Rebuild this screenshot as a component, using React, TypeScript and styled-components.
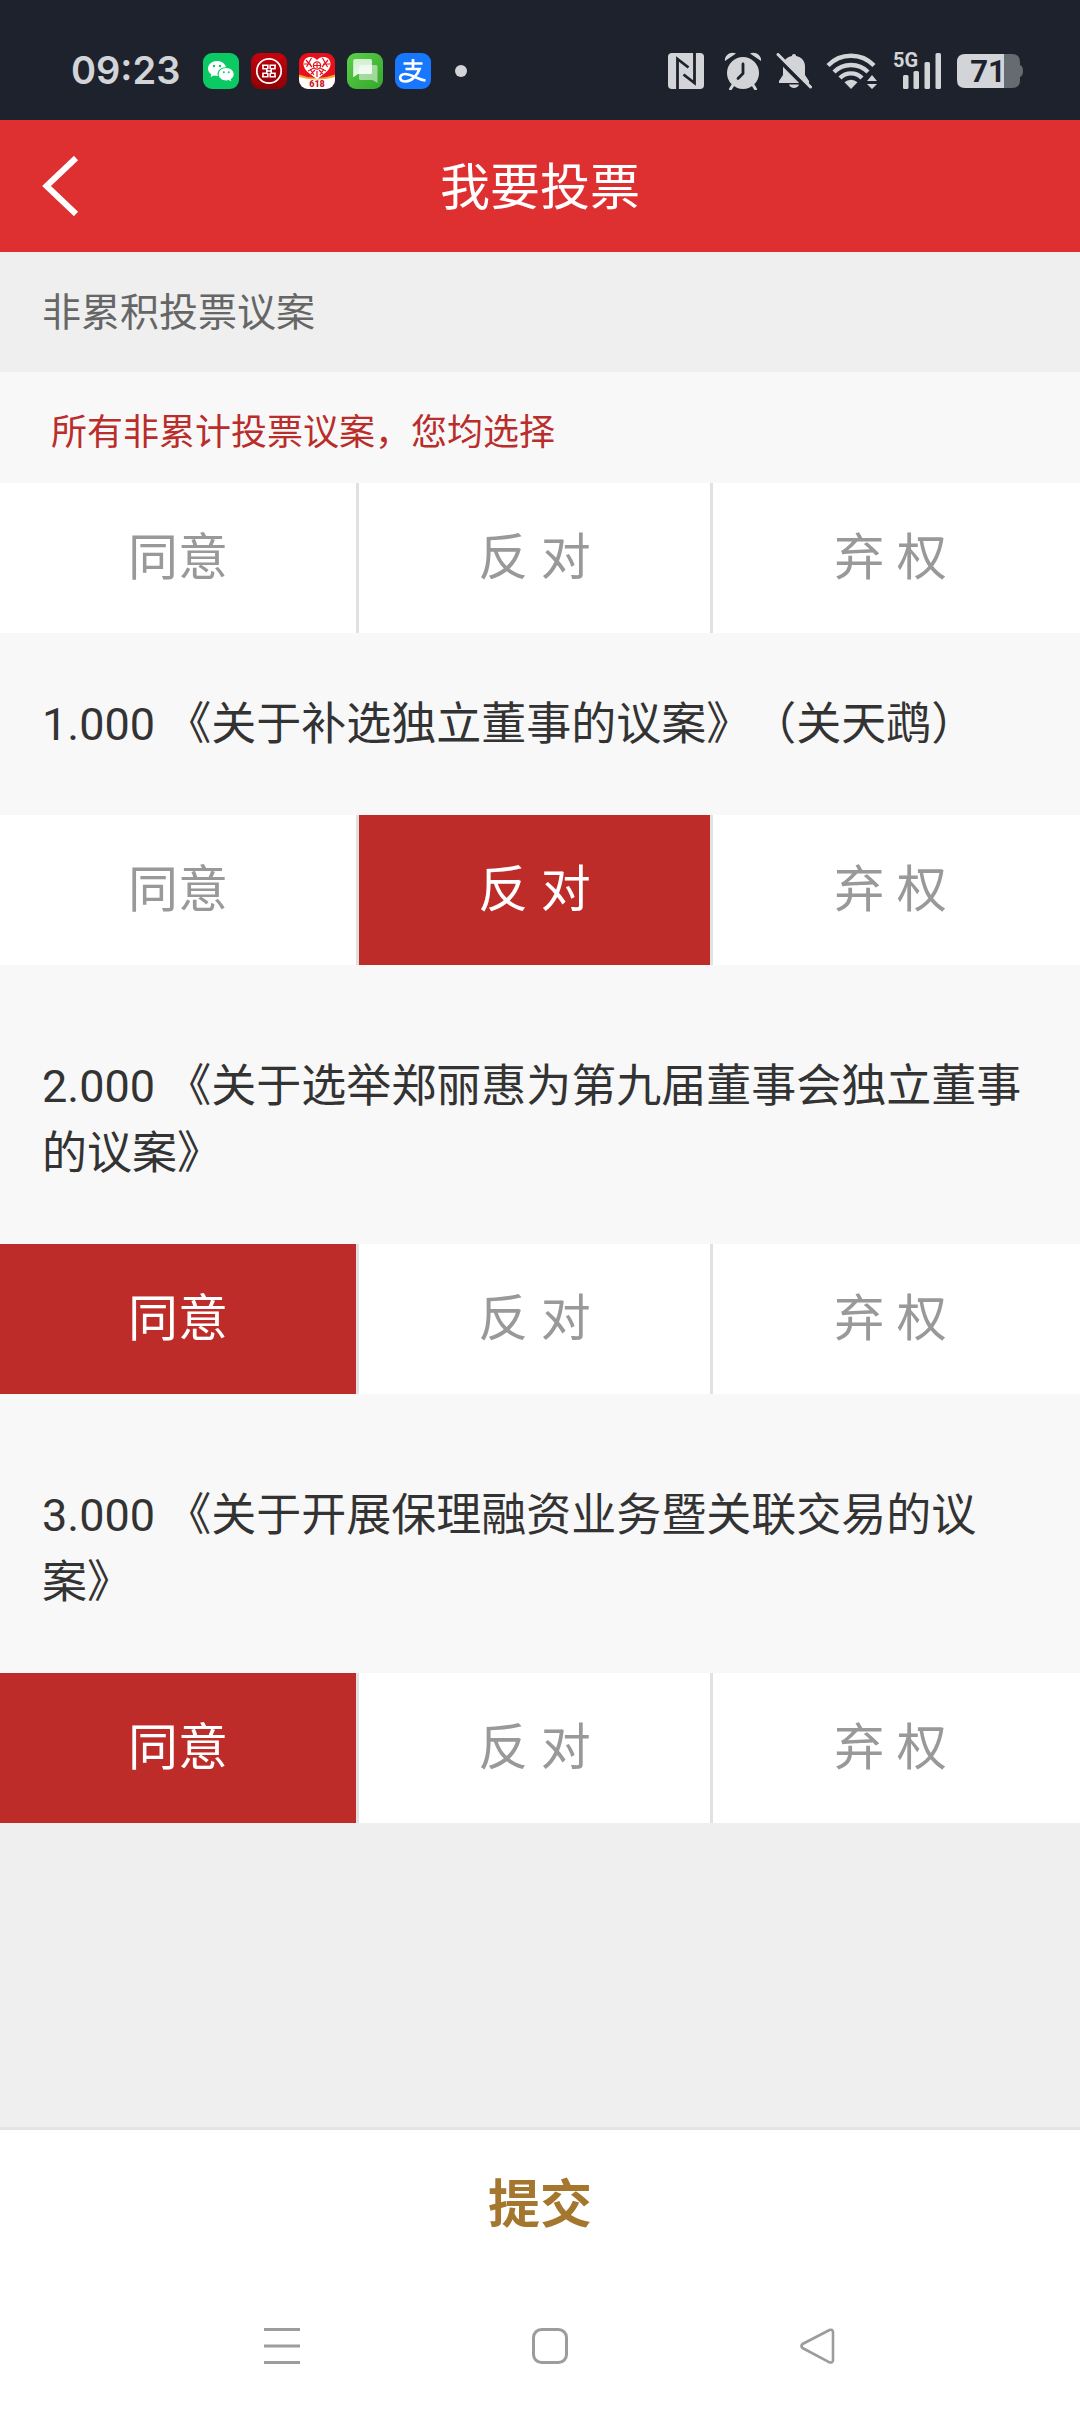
import React, { useState } from "react";
import styled, { createGlobalStyle, css } from "styled-components";

const GlobalStyle = createGlobalStyle`
  * { box-sizing: border-box; }
  body {
    margin: 0;
    background: #efefef;
    font-family: Roboto, "Noto Sans CJK SC", sans-serif;
    text-spacing-trim: space-all;
  }
  button { font-family: inherit; border: 0; padding: 0; cursor: pointer; }
  svg { display: block; }
`;

const Page = styled.div`
  display: flex;
  flex-direction: column;
  min-height: 100vh;
`;

const StatusBar = styled.div`
  display: flex;
  align-items: center;
  height: 120px;
  padding: 22px 57px 0 71px;
  background: #1e222d;
  color: #d3d4d7;
`;

const Clock = styled.time`
  width: 132px;
  padding-bottom: 2px;
  font: 600 38px/38px Inter, sans-serif;
`;

const AppIcons = styled.div`
  display: flex;
  align-items: center;
  gap: 12px;
  margin-right: auto;
`;

const Dot = styled.i`
  width: 12px;
  height: 12px;
  margin-left: 12px;
  border-radius: 50%;
  background: #d3d4d7;
`;

const SystemIcons = styled.div`
  display: flex;
  align-items: center;
  gap: 14px;
`;

const Header = styled.header`
  display: grid;
  grid-template-columns: 120px 1fr 120px;
  align-items: center;
  height: 132px;
  background: #df3031;
`;

const BackButton = styled.button`
  display: flex;
  align-items: center;
  height: 132px;
  padding-left: 42px;
  background: none;
`;

const Title = styled.h1`
  margin: 0;
  padding-top: 4px;
  color: #fff;
  font-size: 50px;
  font-weight: 400;
  line-height: 72px;
  text-align: center;
`;

const SectionTitle = styled.h2`
  margin: 0;
  padding: 31px 42px 29px;
  background: #efefef;
  color: #666;
  font-size: 39px;
  font-weight: 400;
  line-height: 60px;
`;

const Ballot = styled.main`
  background: #f8f8f8;
`;

const Hint = styled.p`
  margin: 0;
  padding: 33px 51px 22px;
  color: #b92d2b;
  font-size: 36px;
  line-height: 56px;
`;

const Proposal = styled.section`
  & + & { padding-top: 30px; }
`;

const ProposalTitle = styled.h3`
  margin: 0;
  padding: 58px 42px 57px;
  color: #333;
  font-size: 45px;
  font-weight: 400;
  line-height: 67px;
`;

const Options = styled.div`
  display: grid;
  grid-template-columns: 359fr 354fr 367fr;
  height: 150px;
  background: #fff;
`;

const Option = styled.button<{ $selected: boolean }>`
  background: #fff;
  color: #999;
  font-size: 50px;
  line-height: 72px;
  border-right: 3px solid #e1e1e1;
  &:last-child { border-right: 0; padding-right: 12px; }
  ${(p) => p.$selected && css`
    background: #be2c2a;
    color: #fff;
  `}
`;

const Footer = styled.footer`
  margin-top: auto;
  border-top: 3px solid #e4e4e4;
  background: #fff;
`;

const Submit = styled.button`
  display: block;
  width: 100%;
  height: 148px;
  padding-top: 4px;
  background: #fff;
  color: #a5762d;
  font-size: 52px;
  font-weight: 700;
  line-height: 76px;
`;

const NavBar = styled.nav`
  display: grid;
  grid-template-columns: repeat(3, 1fr);
  height: 134px;
  padding: 2px 128px 0 148px;
`;

const NavButton = styled.button`
  display: grid;
  place-items: center;
  background: none;
`;

const WeChatIcon = () => (
  <svg width="36" height="36" viewBox="0 0 36 36">
    <rect width="36" height="36" rx="9" fill="#0bca63" />
    <path d="M14 8c-4.900 0-9 3.300-9 7.500 0 2.400 1.300 4.400 3.300 5.800L7.600 24l3.200-1.600c1 .3 2.100.5 3.200.5h.8c-.2-.6-.3-1.200-.3-1.800 0-3.900 3.600-6.900 8-6.900h.5C22.200 10.600 18.500 8 14 8z" fill="#fff" />
    <path d="M23.200 15c-4.200 0-7.500 2.800-7.500 6.200s3.300 6.200 7.500 6.200c.9 0 1.800-.1 2.600-.4l2.500 1.300-.6-2.200c1.800-1.100 3-2.900 3-4.900 0-3.400-3.300-6.200-7.500-6.200z" fill="#fff" />
    <g fill="#0bca63"><circle cx="11" cy="13" r="1.200" /><circle cx="17" cy="13" r="1.200" /><circle cx="20.800" cy="19.200" r="1" /><circle cx="25.700" cy="19.200" r="1" /></g>
  </svg>
);

const BankIcon = () => (
  <svg width="36" height="36" viewBox="0 0 36 36">
    <defs><linearGradient id="bank" x1="0" y1="0" x2="0" y2="1"><stop stopColor="#c5030d" /><stop offset="1" stopColor="#8d0005" /></linearGradient></defs>
    <rect width="36" height="36" rx="9" fill="url(#bank)" />
    <g fill="none" stroke="#fff">
      <circle cx="18" cy="18" r="12.200" strokeWidth="1.700" />
      <path d="M11 12.200h5.800v3.800M25 12.200h-5.800v3.800M11.200 15.800h4.600v4.400h-4.600M24.800 15.800h-4.600v4.400h4.600M16.800 20v3.800H11M19.200 20v3.800H25M12 12v4M24 12v4M12 20v4M24 20v4M15 18h6" strokeWidth="1.600" />
    </g>
  </svg>
);

const PromoIcon = () => (
  <svg width="36" height="36" viewBox="0 0 36 36">
    <defs><clipPath id="promo"><rect width="36" height="36" rx="9" /></clipPath></defs>
    <g clipPath="url(#promo)">
      <rect width="36" height="36" fill="#e8101b" />
      <path d="M0 21.500q18 7 36 0v6H0z" fill="#f7a13a" />
      <path d="M0 24q18 5 36 0v12H0z" fill="#fff" />
      <path d="M18 7C14 2 4 3 4.500 11.500 5 18 12 21 18 26.500c6-5.500 13-8.500 13.500-15C32 3 22 2 18 7z" fill="#fff" />
      <g fill="none" stroke="#e8101b" strokeWidth="1.200">
        <circle cx="18" cy="12.500" r="3.600" />
        <path d="M15 12.500h6M18 10v5M7 7l6 7M12.500 5l-5 9M23.500 5l5 9M29 7l-6 7M9 18l6-3M27 18l-6-3M12 21l4-4M24 21l-4-4M18 18v6M5 11h7M24 11h7M15 22l-4-6M21 22l4-6" />
      </g>
    </g>
    <text x="18" y="34" textAnchor="middle" fontFamily="Roboto, sans-serif" fontWeight="900" fontSize="9" fill="#c9151c">618</text>
  </svg>
);

const MessagesIcon = () => (
  <svg width="36" height="36" viewBox="0 0 36 36">
    <defs>
      <linearGradient id="msg" x1="0" y1="0" x2="1" y2="1"><stop stopColor="#5bd04a" /><stop offset="1" stopColor="#34a62b" /></linearGradient>
      <linearGradient id="bubble" x1="0" y1="0" x2="0" y2="1"><stop stopColor="#fff" stopOpacity=".8" /><stop offset="1" stopColor="#fff" /></linearGradient>
    </defs>
    <rect width="36" height="36" rx="9" fill="url(#msg)" />
    <path d="M13.500 12H29q1.500 0 1.500 1.500V30l-5-3h-12q-1.500 0-1.500-1.500v-12q0-1.500 1.500-1.500z" fill="#fff" opacity=".5" />
    <path d="M8 6h15.500Q25 6 25 7.500v12q0 1.500-1.500 1.500H11l-4.800 3.200V7.800Q6.200 6 8 6z" fill="url(#bubble)" opacity=".92" />
  </svg>
);

const AlipayIcon = () => (
  <svg width="36" height="36" viewBox="0 0 36 36">
    <rect width="36" height="36" rx="9" fill="#1777ff" />
    <path d="M8.500 10.500h19M18 6v10M10.500 16h14c-2 6-8 12.500-14 12.500-7 0-7-7.500-.5-7.500 7 0 12 5.500 20.500 6.500" fill="none" stroke="#fff" strokeWidth="2.700" />
  </svg>
);

const NfcIcon = () => (
  <svg width="42" height="36" viewBox="0 0 42 36">
    <rect width="36" height="36" rx="4" fill="#d3d4d7" />
    <path d="M9.500 36V6l11 8.500M26.500 0v30l-11-8.500" fill="none" stroke="#1e222d" strokeWidth="2.800" />
  </svg>
);

const AlarmIcon = () => (
  <svg width="38" height="38" viewBox="0 0 38 38">
    <g fill="#d3d4d7">
      <circle cx="19" cy="21" r="16" />
      <path d="M1 9C0 4 6-1 12 1.500zM37 9C38 4 32-1 26 1.500z" />
    </g>
    <path d="M9 33l-2.500 4M29 33l2.500 4" stroke="#d3d4d7" strokeWidth="3" strokeLinecap="round" />
    <path d="M19 12v9.500l-5 5" fill="none" stroke="#1e222d" strokeWidth="2.800" strokeLinecap="round" />
  </svg>
);

const MutedIcon = () => (
  <svg width="36" height="36" viewBox="0 0 36 36">
    <path d="M18 1c1.300 0 2 .8 2 2 5.500 1 9 5 9 10v9l4 6v2H3v-2l4-6v-9c0-5 3.500-9 9-10 0-1.200.7-2 2-2zM13 31.500h10c-1 4.500-9 4.500-10 0z" fill="#d3d4d7" />
    <path d="M0 4l34 34" stroke="#1e222d" strokeWidth="4" />
    <path d="M2 1.500L34.500 34" stroke="#d3d4d7" strokeWidth="3" strokeLinecap="round" />
  </svg>
);

const WifiIcon = () => (
  <svg width="52" height="38" viewBox="0 0 52 38">
    <g fill="none" stroke="#d3d4d7" strokeWidth="4.400">
      <path d="M2 13.500a32 32 0 0 1 46 0M8 20a24 24 0 0 1 34 0M14 26a15.500 15.500 0 0 1 22 0" />
    </g>
    <path d="M25 37l-6.500-6.800a9.500 9.500 0 0 1 13 0zM46 23l5 6H41zM46 37l5-5H41z" fill="#d3d4d7" />
  </svg>
);

const SignalIcon = () => (
  <svg width="51" height="50" viewBox="0 0 51 50">
    <g fill="#d3d4d7">
      <text x="1" y="21" fontFamily="Roboto, sans-serif" fontWeight="700" fontSize="20">5G</text>
      <rect x="11" y="29" width="5.500" height="14" rx="1.500" />
      <rect x="21.500" y="25" width="5.500" height="18" rx="1.500" />
      <rect x="32.500" y="16" width="5.500" height="27" rx="1.500" />
      <rect x="43.500" y="7" width="5.500" height="36" rx="1.500" />
    </g>
  </svg>
);

const BatteryIcon = () => (
  <svg width="66" height="34" viewBox="0 0 66 34">
    <path d="M47 0h8q8 0 8 8v3q3 1 3 6t-3 6v3q0 8-8 8h-8z" fill="#666a71" />
    <path d="M8 0h39v34H8q-8 0-8-8V8q0-8 8-8z" fill="#d3d4d7" />
    <text x="31" y="28" textAnchor="middle" fontFamily="Roboto, sans-serif" fontWeight="700" fontSize="31" fill="#1e222d">71</text>
  </svg>
);

type Choice = "同意" | "反 对" | "弃 权";
const CHOICES: Choice[] = ["同意", "反 对", "弃 权"];

const PROPOSALS: { title: string; initial: Choice }[] = [
  { title: "1.000 《关于补选独立董事的议案》（关天鹉）", initial: "反 对" },
  { title: "2.000 《关于选举郑丽惠为第九届董事会独立董事的议案》", initial: "同意" },
  { title: "3.000 《关于开展保理融资业务暨关联交易的议案》", initial: "同意" },
];

function OptionRow({ label, value, onChange }: { label: string; value?: Choice; onChange: (c: Choice) => void }) {
  return (
    <Options role="group" aria-label={label}>
      {CHOICES.map((c) => (
        <Option key={c} type="button" $selected={c === value} aria-pressed={c === value} onClick={() => onChange(c)}>
          {c}
        </Option>
      ))}
    </Options>
  );
}

export default function App() {
  const [votes, setVotes] = useState<Choice[]>(PROPOSALS.map((p) => p.initial));
  return (
    <Page>
      <GlobalStyle />
      <StatusBar>
        <Clock>09:23</Clock>
        <AppIcons>
          <WeChatIcon />
          <BankIcon />
          <PromoIcon />
          <MessagesIcon />
          <AlipayIcon />
          <Dot />
        </AppIcons>
        <SystemIcons>
          <NfcIcon />
          <AlarmIcon />
          <MutedIcon />
          <WifiIcon />
          <SignalIcon />
          <BatteryIcon />
        </SystemIcons>
      </StatusBar>
      <Header>
        <BackButton type="button" aria-label="返回">
          <svg width="37" height="60" viewBox="0 0 37 60">
            <path d="M34 2L4.500 30 34 58" fill="none" stroke="#fff" strokeWidth="6" />
          </svg>
        </BackButton>
        <Title>我要投票</Title>
      </Header>
      <SectionTitle>非累积投票议案</SectionTitle>
      <Ballot>
        <Hint>所有非累计投票议案，您均选择</Hint>
        <OptionRow label="全部议案" onChange={(c) => setVotes(PROPOSALS.map(() => c))} />
        {PROPOSALS.map((p, i) => (
          <Proposal key={p.title}>
            <ProposalTitle>{p.title}</ProposalTitle>
            <OptionRow
              label={p.title}
              value={votes[i]}
              onChange={(c) => setVotes(votes.map((v, j) => (j === i ? c : v)))}
            />
          </Proposal>
        ))}
      </Ballot>
      <Footer>
        <Submit type="button">提交</Submit>
        <NavBar>
          <NavButton type="button" aria-label="菜单">
            <svg width="36" height="36" viewBox="0 0 36 36">
              <path d="M0 1.500h36M0 18h36M0 34.500h36" stroke="#9c9c9c" strokeWidth="3" />
            </svg>
          </NavButton>
          <NavButton type="button" aria-label="主页">
            <svg width="36" height="36" viewBox="0 0 36 36">
              <rect x="1.500" y="1.500" width="33" height="33" rx="8" fill="none" stroke="#9c9c9c" strokeWidth="3" />
            </svg>
          </NavButton>
          <NavButton type="button" aria-label="后退">
            <svg width="36" height="36" viewBox="0 0 36 36">
              <path d="M29.500 2L2.500 16q-2 2 0 4l27 14.300q3 1 3.500-2V4q-.5-3-3.500-2z" fill="none" stroke="#9c9c9c" strokeWidth="2.600" strokeLinejoin="round" />
            </svg>
          </NavButton>
        </NavBar>
      </Footer>
    </Page>
  );
}
